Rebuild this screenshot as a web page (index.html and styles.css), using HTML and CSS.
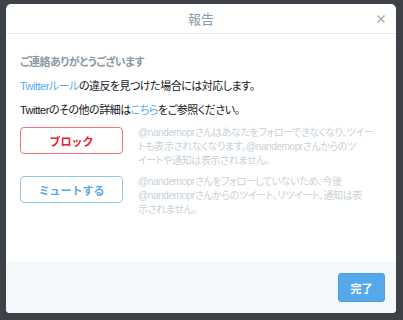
FILE: index.html
```html
<!DOCTYPE html>
<html lang="ja">
<head>
    <meta charset="UTF-8">
    <title>報告</title>
    <link rel="stylesheet" href="styles.css">
</head>
<body>
    <div class="modal">
        <div class="modal-header">
            <h3 class="modal-title">報告</h3>
            <button class="close-btn" aria-label="閉じる">
                <svg width="8" height="8" viewBox="0 0 8 8">
                    <path d="M0.5 0.5 L7.5 7.5 M7.5 0.5 L0.5 7.5" stroke="#9aa8b3" stroke-width="1.3" fill="none"/>
                </svg>
            </button>
        </div>

        <div class="modal-body">
            <p class="thanks">ご連絡ありがとうございます</p>
            <p class="line"><a href="#">Twitterルール</a>の違反を見つけた場合には対応します。</p>
            <p class="line">Twitterのその他の詳細は<a href="#">こちら</a>をご参照ください。</p>

            <div class="action-row">
                <button class="btn btn-block">ブロック</button>
                <p class="action-desc">@nandemoprさんはあなたをフォローできなくなり、ツイー<br>トも表示されなくなります。@nandemoprさんからのツ<br>イートや通知は表示されません。</p>
            </div>

            <div class="action-row">
                <button class="btn btn-mute">ミュートする</button>
                <p class="action-desc">@nandemoprさんをフォローしていないため、今後<br>@nandemoprさんからのツイート、リツイート、通知は表<br>示されません。</p>
            </div>
        </div>

        <div class="modal-footer">
            <button class="btn-done">完了</button>
        </div>
    </div>
</body>
</html>
```

FILE: styles.css
```css
* {
    margin: 0;
    padding: 0;
    box-sizing: border-box;
}

body {
    width: 403px;
    height: 320px;
    overflow: hidden;
    background-color: #3c4247;
    font-family: "Liberation Sans", "Noto Sans CJK JP", sans-serif;
    font-feature-settings: "palt";
    padding: 4px 0 0 6px;
}

.modal {
    display: flex;
    flex-direction: column;
    width: 390px;
    height: 309px;
    background: #fff;
    border-radius: 5px 5px 4px 4px;
    overflow: hidden;
}

.modal-header {
    position: relative;
    height: 30px;
    border-bottom: 1px solid #e6ecf0;
    display: flex;
    justify-content: center;
    align-items: center;
}

.modal-title {
    font-size: 13px;
    font-weight: normal;
    color: #8899a6;
}

.close-btn {
    position: absolute;
    right: 11px;
    top: 11px;
    border: none;
    background: none;
    display: flex;
}

.modal-body {
    flex: 1;
    padding: 21px 14px 0 14px;
}

.thanks {
    font-size: 11px;
    font-weight: bold;
    color: #8899a6;
    line-height: 15px;
    letter-spacing: -0.5px;
    margin-bottom: 9px;
}

.line {
    font-size: 11px;
    color: #14171a;
    line-height: 15px;
    letter-spacing: -0.5px;
    margin-bottom: 9px;
}

.line a {
    color: #55acee;
    text-decoration: none;
}

.action-row {
    display: flex;
    gap: 15px;
    margin-top: 2px;
    margin-bottom: 8px;
}

.btn {
    flex: none;
    width: 103px;
    height: 27px;
    background: #fff;
    border-radius: 4px;
    font-family: inherit;
    font-size: 11px;
    font-weight: bold;
    cursor: pointer;
}

.btn-block {
    border: 1px solid #f27474;
    color: #e8202c;
}

.btn-mute {
    border: 1px solid #90c9f2;
    color: #5aa8e3;
}

.action-desc {
    font-size: 10px;
    line-height: 14px;
    letter-spacing: -0.4px;
    white-space: nowrap;
    color: #c8d1d8;
    margin-top: -1px;
}

.modal-footer {
    height: 51px;
    background: #f5f8fa;
    display: flex;
    justify-content: flex-end;
    align-items: flex-start;
    padding: 11px 11px 0 0;
}

.btn-done {
    width: 47px;
    height: 29px;
    border: 1px solid #4b9fe0;
    border-radius: 3px;
    background: #55a9ea;
    color: #fff;
    font-family: inherit;
    font-size: 11px;
    font-weight: bold;
}
```
